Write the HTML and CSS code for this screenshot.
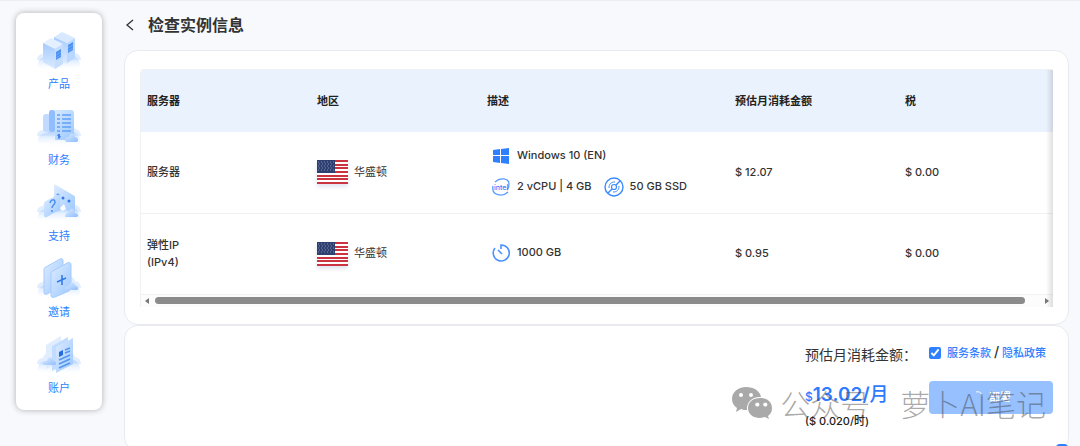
FILE: index.html
```html
<!DOCTYPE html>
<html lang="zh-CN">
<head>
  <meta charset="UTF-8">
  <meta name="viewport" content="width=device-width, initial-scale=1">
  <title>检查实例信息</title>
  <link rel="stylesheet" href="styles.css">
</head>
<body>

  <!-- Shared gradients and symbols -->
  <svg class="defs" width="0" height="0" aria-hidden="true">
    <defs>
      <linearGradient id="cloudFill" x1="0" y1="0" x2="0" y2="1">
        <stop offset="0" stop-color="#9cc5ff"/>
        <stop offset="1" stop-color="#ffffff" stop-opacity="0"/>
      </linearGradient>
      <linearGradient id="lightFill" x1="0" y1="0" x2="1" y2="1">
        <stop offset="0" stop-color="#deecff"/>
        <stop offset="1" stop-color="#9cc8ff"/>
      </linearGradient>
      <linearGradient id="sideFill" x1="0" y1="0" x2="0" y2="1">
        <stop offset="0" stop-color="#a5cbff"/>
        <stop offset="1" stop-color="#dcebff"/>
      </linearGradient>
      <linearGradient id="puffFill" x1="0" y1="0" x2="1" y2="1">
        <stop offset="0" stop-color="#dcebff"/>
        <stop offset="1" stop-color="#8fbdff"/>
      </linearGradient>
      <symbol id="cloud" viewBox="0 0 46 42">
        <path d="M1 30c0-4 3-6 6-6 1-5 6-6 8-3h16c2-4 7-3 8 2 3 0 6 3 6 7z" fill="#e2eeff"/>
        <path d="M2 36c-1-6 4-9 9-9 5-5 18-6 23-1 5-1 10 3 10 9 0 5-8 6-21 6S3 40 2 36z" fill="url(#cloudFill)"/>
      </symbol>
      <symbol id="flag" viewBox="0 0 31 24">
        <path fill="#fff" d="M0 0h31v24H0z"/>
        <path stroke="#cc3340" stroke-width="2" d="M0 1h31M0 5h31M0 8h31M0 12h31M0 16h31M0 19h31M0 23h31"/>
        <path fill="#2f3f70" d="M0 0h18v13H0z"/>
        <path stroke="#7f8cb2" stroke-width="1" stroke-dasharray="1 2" d="M1 2h16M2 4h15M1 6h16M2 8h15M1 10h16"/>
      </symbol>
    </defs>
  </svg>

  <div class="layout">
    <nav class="sidebar">
      <a href="#" class="nav-item">
        <svg viewBox="0 0 46 42">
          <use href="#cloud"/>
          <path d="M18 7l8-5 13 6-8 5z" fill="#d8e9ff"/>
          <path d="M18 7l13 6v21l-13-6z" fill="url(#sideFill)"/>
          <path d="M31 13l8-5v20l-8 5z" fill="#b9d7ff"/>
          <path d="M7 13l8-5 12 6-8 5z" fill="#e4f0ff"/>
          <path d="M7 13l12 6v20L7 32z" fill="url(#sideFill)"/>
          <path d="M19 19l8-5v20l-8 5z" fill="#c5deff"/>
          <path d="M20 22l5-3v8l-5 3zM32 15l5-3v8l-5 3z" fill="#4e90f2"/>
          <path d="M20 25l5-3m-5 6l5-3M32 18l5-3m-5 6l5-3" stroke="#86b6fb" stroke-width=".6"/>
        </svg>
        <span>产品</span>
      </a>
      <a href="#" class="nav-item">
        <svg viewBox="0 0 46 42">
          <use href="#cloud"/>
          <rect x="7" y="8" width="8" height="18" rx="3" fill="#c0dbff"/>
          <path d="M13 4h22c2 0 3 1 3 3v27H19V9z" fill="url(#lightFill)"/>
          <rect x="13" y="4" width="6" height="22" rx="3" fill="#91beff"/>
          <path d="M21 9h3m2 0h9M21 13h3m2 0h9M21 17h3m2 0h9M21 21h3m2 0h9M21 25h3m2 0h9" stroke="#62a0f8" stroke-width="1.5"/>
          <path d="M24 29c-3-1-3 1-1 1s2 2-1 1m1-3v5" fill="none" stroke="#2d75e8"/>
          <path d="M29 35c0-4 3-4 4-4 1-5 6-4 6 0 3 0 4 4 2 5H30z" fill="url(#puffFill)"/>
        </svg>
        <span>财务</span>
      </a>
      <a href="#" class="nav-item">
        <svg viewBox="0 0 46 42">
          <use href="#cloud"/>
          <path d="M18 4c0-1 1-2 2-1l17 10c2 1 2 2 2 3v16L18 22z" fill="url(#lightFill)"/>
          <circle cx="22" cy="13" r="1.5" fill="#347be9"/>
          <circle cx="27" cy="16" r="1.5" fill="#347be9"/>
          <circle cx="33" cy="19" r="1.5" fill="#347be9"/>
          <path d="M24 26l4-4 2 5-4 2z" fill="#fff"/>
          <path d="M8 22c0-2 1-3 2-3l11-6c2-1 3 0 3 2v13l-8 4-5 3c-3 1-3-1-3-3z" fill="url(#lightFill)"/>
          <path d="M14 21c1-4 5-4 5-1s-3 3-3 6m0 2v2" fill="none" stroke="#4b8ff2" stroke-width="1.5"/>
          <path d="M29 35c0-4 3-5 4-5 1-5 6-4 6 1 3 0 4 3 2 4z" fill="url(#puffFill)"/>
        </svg>
        <span>支持</span>
      </a>
      <a href="#" class="nav-item">
        <svg viewBox="0 0 46 42">
          <use href="#cloud"/>
          <path d="M8 12c0-2 1-3 2-3l14-8c2-1 3 0 3 2v24L11 36c-2 1-3 0-3-2z" fill="url(#lightFill)" stroke="#a6cbff"/>
          <path d="M15 16c0-2 1-3 2-3l14-8c3-1 4 0 4 2v22c0 2-1 3-2 4l-14 6c-3 1-4 0-4-2z" fill="url(#lightFill)" stroke="#a6cbff"/>
          <path d="M21 24l9-4m-4-3v10" stroke="#347be9" stroke-width="1.6"/>
          <path d="M29 32c0-4 3-4 4-4 1-5 6-4 6 0 3 0 4 3 2 4z" fill="url(#puffFill)"/>
        </svg>
        <span>邀请</span>
      </a>
      <a href="#" class="nav-item">
        <svg viewBox="0 0 46 42">
          <use href="#cloud"/>
          <path d="M10 11l15-9v26l-15 7z" fill="#e0edff"/>
          <path d="M16 12l16-9v26l-16 8z" fill="#c2dcff"/>
          <path d="M20 13l17-9v26l-17 9z" fill="url(#lightFill)"/>
          <path d="M23 18l4-2v5l-4 2z" fill="#236be1"/>
          <path d="M29 16l5-2m-5 5l5-2M23 26l11-5m-11 9l11-5m-11 9l11-5" stroke="#5696f3" stroke-width="1.5"/>
          <path d="M7 31c0-4 3-4 4-4 1-5 6-4 6 0 3 0 4 3 2 4z" fill="url(#puffFill)"/>
        </svg>
        <span>账户</span>
      </a>
    </nav>

    <main class="content">
      <header class="page-header">
        <button class="back" type="button" aria-label="返回">
          <svg viewBox="0 0 10 12"><path d="M8 1L2 6l6 5" fill="none" stroke="#333" stroke-width="1.3"/></svg>
        </button>
        <h1>检查实例信息</h1>
      </header>

      <section class="card order">
        <div class="table-wrap">
          <table>
            <colgroup>
              <col class="col-server"><col class="col-region"><col class="col-desc"><col class="col-price"><col>
            </colgroup>
            <thead>
              <tr>
                <th>服务器</th>
                <th>地区</th>
                <th>描述</th>
                <th>预估月消耗金额</th>
                <th>税</th>
              </tr>
            </thead>
            <tbody>
              <tr>
                <td>服务器</td>
                <td><div class="region"><svg class="flag"><use href="#flag"/></svg>华盛顿</div></td>
                <td>
                  <div class="specs">
                    <span class="spec">
                      <svg viewBox="0 0 20 20"><path fill="#2f80ff" d="M2 4l7-1v6H2zM10 3l8-1v7h-8zM2 10h7v7l-7-1zM10 10h8v8l-8-1z"/></svg>
                      Windows 10 (EN)
                    </span>
                    <span class="spec">
                      <svg viewBox="0 0 20 20">
                        <path d="M4 5C9 0 18 1 18 7c0 3-1 5-2 6M2 9c-2 10 10 11 15 6" fill="none" stroke="#5a9cff" stroke-width="1.3"/>
                        <text x="3" y="13" class="intel">intel</text>
                      </svg>
                      2 vCPU | 4 GB
                    </span>
                    <span class="spec">
                      <svg viewBox="0 0 20 20" fill="none" stroke="#3b89ff" stroke-width="1.4">
                        <circle cx="10" cy="10" r="9"/>
                        <path d="M4 16l4-4M12 8l4-4"/>
                        <path d="M5 11c0-4 2-6 6-6M15 9c0 4-2 6-6 6" stroke-width="1"/>
                        <circle cx="10" cy="10" r="2.5" stroke-width="1.2"/>
                      </svg>
                      50 GB SSD
                    </span>
                  </div>
                </td>
                <td>$ 12.07</td>
                <td>$ 0.00</td>
              </tr>
              <tr>
                <td>弹性IP<br>(IPv4)</td>
                <td><div class="region"><svg class="flag"><use href="#flag"/></svg>华盛顿</div></td>
                <td>
                  <div class="specs">
                    <span class="spec">
                      <svg viewBox="0 0 20 20" fill="none" stroke="#4a92ff" stroke-width="1.6">
                        <path d="M10 6V2a8 8 0 1 1-6 3M7 7l4 4"/>
                      </svg>
                      1000 GB
                    </span>
                  </div>
                </td>
                <td>$ 0.95</td>
                <td>$ 0.00</td>
              </tr>
            </tbody>
          </table>
          <div class="scrollbar">
            <span class="arrow arrow-left"></span>
            <span class="thumb"></span>
            <span class="arrow arrow-right"></span>
          </div>
        </div>
      </section>

      <section class="card summary">
        <div class="total">
          <p class="total-label">预估月消耗金额：</p>
          <p class="price"><small>$</small><strong>13.02/</strong>月</p>
          <p class="hourly">($ 0.020/时)</p>
        </div>
        <div class="confirm">
          <div class="terms">
            <input type="checkbox" id="agree" aria-label="服务条款 / 隐私政策" checked>
            <label for="agree"><a href="#">服务条款</a> <span class="slash">/</span> <a href="#">隐私政策</a></label>
          </div>
          <button class="deploy" type="button">
            <svg viewBox="0 0 14 14"><path d="M5 2c3-1 6 1 6 4" fill="none" stroke="#fff"/></svg>
            部署
          </button>
        </div>
        <div class="watermark">
          <svg viewBox="0 0 40 34">
            <path fill="#a9a9a9" fill-rule="evenodd" d="M14 1C6 1 0 6 0 13c0 4 2 7 5 9l-1 4 5-3c2 1 4 1 6 1-1-8 6-14 14-13C28 5 22 1 14 1zM9 7a2 2 0 1 1 0 4 2 2 0 0 1 0-4zm10 0a2 2 0 1 1 0 4 2 2 0 0 1 0-4z"/>
            <path fill="#a9a9a9" fill-rule="evenodd" d="M28 12c-7 0-12 4-12 10s5 10 12 10l5-1 4 2-1-3c3-2 4-5 4-8 0-6-5-10-12-10zm-4 5a2 2 0 1 1 0 3 2 2 0 0 1 0-3zm8 0a2 2 0 1 1 0 3 2 2 0 0 1 0-3z"/>
          </svg>
          <span>公众号</span>
          <span>萝卜AI笔记</span>
        </div>
      </section>
    </main>
  </div>

  <button class="chat" type="button" aria-label="客服"></button>

</body>
</html>
```
FILE: styles.css
```css
* {
  box-sizing: border-box;
}

body {
  margin: 0;
  height: 100vh;
  overflow: hidden;
  background: #f7f9fd;
  border-top: 1px solid #eceef3;
  font-family: Inter, "Noto Sans CJK SC", sans-serif;
  font-size: 11px;
  line-height: 17px;
  font-weight: 500;
  color: #333;
}

p,
h1 {
  margin: 0;
}

a {
  color: #2f80ff;
  text-decoration: none;
}

button {
  border: 0;
  padding: 0;
  font: inherit;
  cursor: pointer;
}

.defs {
  position: absolute;
}

.layout {
  display: flex;
  align-items: flex-start;
  gap: 22px;
  padding: 12px 11px 0 16px;
}

/* Sidebar */
.sidebar {
  flex: 0 0 86px;
  display: flex;
  flex-direction: column;
  gap: 13px;
  padding: 17px 0 13px;
  background: #fff;
  border-radius: 8px;
  box-shadow: 0 0 6px rgba(0, 0, 0, 0.3);
}

.nav-item {
  display: flex;
  flex-direction: column;
  align-items: center;
  gap: 4px;
  font-weight: 400;
}

.nav-item svg {
  width: 46px;
  height: 42px;
}

/* Page header */
.content {
  flex: 1;
  min-width: 0;
}

.page-header {
  display: flex;
  align-items: center;
  gap: 12px;
  height: 24px;
  margin-bottom: 13px;
}

.back {
  width: 12px;
  height: 12px;
  background: none;
}

.back svg {
  display: block;
  width: 12px;
  height: 12px;
}

h1 {
  font-size: 16px;
  line-height: 24px;
  font-weight: 700;
}

.card {
  background: #fff;
  border: 1px solid #e8eaef;
  border-radius: 14px;
}

/* Order table */
.order {
  padding: 18px 15px 17px;
}

.table-wrap {
  position: relative;
  overflow: hidden;
  border: 1px solid #f0f1f3;
  border-right: 0;
  border-bottom: 0;
  border-radius: 4px 0 0 0;
}

/* shade on the edge where more columns are hidden */
.table-wrap::after {
  content: "";
  position: absolute;
  top: 0;
  right: 0;
  bottom: 0;
  width: 7px;
  background: linear-gradient(to right, rgba(0, 0, 0, 0), rgba(0, 0, 0, 0.12));
}

table {
  width: 100%;
  table-layout: fixed;
  border-collapse: collapse;
}

.col-server,
.col-region,
.col-price {
  width: 170px;
}

.col-desc {
  width: 248px;
}

th,
td {
  padding: 0 6px;
  text-align: left;
}

th {
  height: 62px;
  background: #eaf2fe;
  color: #222;
  font-weight: 700;
}

td {
  height: 81px;
  border-bottom: 1px solid #f1f1f3;
}

.region {
  display: flex;
  align-items: center;
  gap: 6px;
  font-weight: 400;
}

.flag {
  width: 31px;
  height: 24px;
  box-shadow: 0 3px 4px rgba(60, 80, 160, 0.15);
}

.specs {
  display: flex;
  flex-wrap: wrap;
  gap: 11px 12px;
  padding: 0 0 2px 4px;
}

.spec {
  display: flex;
  align-items: center;
  gap: 6px;
  height: 20px;
}

.spec:first-child {
  margin-right: 60px;
}

.spec svg {
  width: 20px;
  height: 20px;
}

.intel {
  font-size: 7px;
  font-weight: 500;
  fill: #2f80ff;
}

.scrollbar {
  display: flex;
  align-items: center;
  gap: 6px;
  height: 12px;
  padding: 0 4px;
  background: #fcfcfc;
}

.thumb {
  flex: 1;
  height: 7px;
  margin-right: 14px;
  border-radius: 4px;
  background: #8b8b8b;
}

.arrow {
  border: 3px solid transparent;
}

.arrow-left {
  border-left: 0;
  border-right: 4px solid #777;
}

.arrow-right {
  border-right: 0;
  border-left: 4px solid #777;
}

/* Summary */
.summary {
  position: relative;
  display: flex;
  justify-content: flex-end;
  gap: 12px;
  height: 126px;
  padding: 17px 15px 16px;
}

.total-label {
  font-size: 14px;
  line-height: 24px;
  font-weight: 400;
}

.price {
  margin-top: 14px;
  color: #2f7bff;
  font-size: 19px;
  line-height: 28px;
}

.price small {
  font-size: 12px;
}

.price strong {
  font-weight: 600;
}

.hourly {
  line-height: 20px;
  color: #222;
}

.confirm {
  width: 124px;
}

.terms {
  display: flex;
  align-items: center;
  gap: 6px;
  height: 20px;
  margin-bottom: 18px;
  white-space: nowrap;
}

.terms input {
  width: 12px;
  height: 12px;
  margin: 0;
  accent-color: #2f80ff;
}

.slash {
  font-size: 14px;
}

.deploy {
  display: flex;
  align-items: center;
  justify-content: center;
  gap: 4px;
  width: 100%;
  height: 33px;
  border-radius: 4px;
  background: #97c0ff;
  color: #fff;
}

.deploy svg {
  width: 14px;
  height: 14px;
}

/* Watermark over the total */
.watermark {
  position: absolute;
  right: 22px;
  top: 56px;
  display: flex;
  align-items: center;
  gap: 30px;
  color: rgba(60, 60, 60, 0.45);
  font-family: "Noto Sans CJK SC", sans-serif;
  font-size: 30px;
  line-height: 42px;
  font-weight: 300;
  white-space: nowrap;
  pointer-events: none;
}

.watermark svg {
  width: 40px;
  height: 34px;
  margin-right: -22px;
}

.chat {
  position: fixed;
  right: 12px;
  bottom: -10px;
  width: 12px;
  height: 12px;
  border-radius: 4px;
  background: #2f80ff;
}
```
